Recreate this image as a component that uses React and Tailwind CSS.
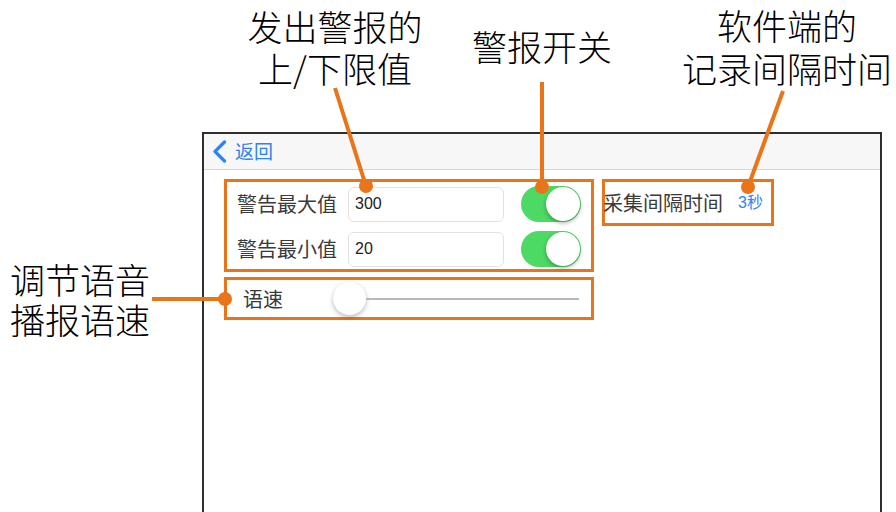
import React from "react";

const ORANGE = "#e9751a";

const Toggle = () => (
  <div className="w-[60px] h-[36px] rounded-full bg-[#4cd964] flex items-center justify-end p-[1px]">
    <div className="w-[34px] h-[34px] rounded-full bg-white shadow-[0_2px_4px_rgba(0,0,0,0.3)]" />
  </div>
);

const AlarmRow = ({ label, value }) => (
  <div className="flex items-center h-[36px]">
    <span className="w-[111px] text-[20px] text-[#3a3a3a]">{label}</span>
    <div className="w-[156px] h-[35px] rounded-[6px] border border-[#e2e2e2] flex items-center pl-[6px] text-[16px] text-[#222] font-['Liberation_Sans','Noto_Sans_CJK_SC',sans-serif]">
      {value}
    </div>
    <div className="ml-[17px]">
      <Toggle />
    </div>
  </div>
);

const App = () => {
  return (
    <div className="relative w-[896px] h-[512px] overflow-hidden bg-white pl-[202px] pt-[132px] font-['Noto_Sans_CJK_SC',sans-serif]">
      {/* device screen */}
      <div className="w-[680px] h-[420px] border-2 border-b-0 border-[#2e2e2e] bg-white">
        <div className="h-[36px] bg-[#f7f7f7] border-b border-[#d6d6d6] flex items-center pl-[8px] text-[#2d84f2]">
          <svg width="15" height="23" viewBox="0 0 15 23" fill="none">
            <path d="M12.5 2 L3 11.5 L12.5 21" stroke="#2d84f2" strokeWidth="3.2" strokeLinecap="round" strokeLinejoin="round" />
          </svg>
          <span className="ml-[8px] text-[19px]">返回</span>
        </div>

        <div className="flex pl-[20px] pt-[9px]">
          <div className="flex flex-col gap-[5px]">
            <div className="w-[370px] border-[3px] pt-[4px] pb-[2px] pl-[10px] flex flex-col gap-[9px]" style={{ borderColor: ORANGE }}>
              <AlarmRow label="警告最大值" value="300" />
              <AlarmRow label="警告最小值" value="20" />
            </div>
            <div className="w-[370px] h-[43px] border-[3px] flex items-center pl-[16px] pr-[12px]" style={{ borderColor: ORANGE }}>
              <span className="w-[90px] text-[20px] text-[#3a3a3a]">语速</span>
              <div className="flex-1 flex items-center">
                <div className="w-[33px] h-[33px] rounded-full bg-white shadow-[0_2px_5px_rgba(0,0,0,0.28)]" />
                <div className="flex-1 h-[2px] bg-[#b8b8b8]" />
              </div>
            </div>
          </div>

          <div className="ml-[8px] w-[172px] h-[47px] border-[3px] flex items-center self-start" style={{ borderColor: ORANGE }}>
            <span className="text-[20px] text-[#3a3a3a] -ml-[2px]">采集间隔时间</span>
            <span className="ml-[15px] text-[16px] text-[#2d84f2] font-['Liberation_Sans','Noto_Sans_CJK_SC',sans-serif]">3秒</span>
          </div>
        </div>
      </div>

      {/* annotation labels */}
      <div className="absolute left-[235px] top-[5px] w-[200px] text-center text-[35px] leading-[42px] font-light text-black">
        <div>发出警报的</div>
        <div>上/下限值</div>
      </div>
      <div className="absolute left-[442px] top-[25px] w-[200px] text-center text-[35px] leading-[42px] font-light text-black">
        警报开关
      </div>
      <div className="absolute left-[672px] top-[3px] w-[230px] text-center text-[35px] leading-[43px] font-light text-black">
        <div>软件端的</div>
        <div>记录间隔时间</div>
      </div>
      <div className="absolute left-[10px] top-[259px] text-[35px] leading-[40px] font-light text-black">
        <div>调节语音</div>
        <div>播报语速</div>
      </div>

      {/* callout lines */}
      <svg className="absolute left-0 top-0 pointer-events-none" width="896" height="512">
        <g stroke={ORANGE} strokeWidth="4" fill={ORANGE}>
          <line x1="335" y1="88" x2="366" y2="186" />
          <line x1="542" y1="82" x2="542" y2="187" />
          <line x1="783" y1="91" x2="748" y2="187" />
          <line x1="152" y1="299" x2="225" y2="299" />
          <circle cx="366" cy="186" r="7" stroke="none" />
          <circle cx="542" cy="187" r="7" stroke="none" />
          <circle cx="748" cy="187" r="7" stroke="none" />
          <circle cx="225" cy="299" r="7" stroke="none" />
        </g>
      </svg>
    </div>
  );
};

export default App;
